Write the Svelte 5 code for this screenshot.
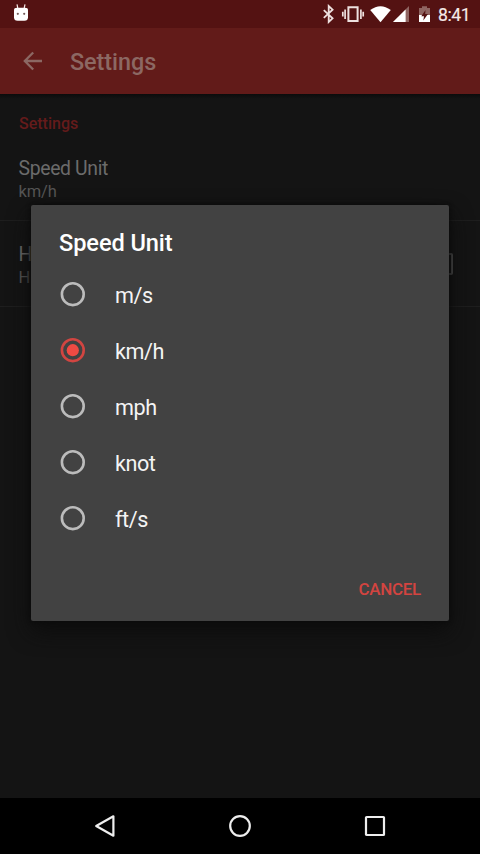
<script>
  const units = ['m/s', 'km/h', 'mph', 'knot', 'ft/s'];
  let selected = $state('km/h');
</script>

<div class="screen">
  <div class="status">
    <svg class="debug" width="16" height="18" viewBox="0 0 16 18">
      <path d="M4 .4 4.8 4M12 .4 11.2 4" stroke="#f7e9e7" stroke-width="1.2" />
      <path d="M1 6.2Q1 3.8 4 3.8H12Q15 3.8 15 6.2V13.2Q15 16.8 11.4 16.8H4.6Q1 16.8 1 13.2Z" fill="#fff" />
      <circle cx="4.8" cy="9.8" r="1.1" fill="#745b59" /><circle cx="11.2" cy="9.8" r="1.1" fill="#745b59" />
    </svg>
    <svg class="icons" width="110" height="20" viewBox="0 0 110 20" fill="none">
      <path d="M3.8 6.2 12.6 14.3 8.7 18V2L12.6 5.7 3.8 13.8" stroke="#eee1df" stroke-width="1.8" />
      <path d="M28.4 3.3H37.6V17.1H28.4Z" stroke="#eee1df" stroke-width="2" />
      <path d="M25.1 5.5V15M40.9 5.5V15M22.8 7.8V12.5M43.2 7.8V12.5" stroke="#eee1df" stroke-width="1.7" />
      <path d="M50.2 6.1Q60.5-1.7 70.8 6.1L60.5 18.2Z" fill="#fff" />
      <path d="M73 18 89 2V18Z" fill="#8f6461" />
      <path d="M73 18 85.6 5.4V18Z" fill="#fff" />
      <path d="M99 4H102V2.3H107V4H110V18H99Z" fill="#8f6461" />
      <path d="M99 11H110V18H99Z" fill="#fff" />
      <path d="M105.5 6 101.3 12.2H104L103.3 16.5 108 10H105.2Z" fill="#541212" />
    </svg>
    <span class="time">8:41</span>
  </div>
  <header>
    <svg width="20" height="20" viewBox="0 0 20 20" fill="none" stroke="#8c6863" stroke-width="2.3">
      <path d="M19 10H2M10.2 1.5 1.8 10 10.2 18.5" />
    </svg>
    <h1>Settings</h1>
  </header>
  <main>
    <div class="category">Settings</div>
    <div class="pref first">
      <div class="name">Speed Unit</div>
      <div class="summary">km/h</div>
    </div>
    <div class="pref second">
      <div>
        <div class="name">H</div>
        <div class="summary">H</div>
      </div>
      <span class="check"></span>
    </div>
  </main>
  <nav>
    <svg width="22" height="24" viewBox="0 0 22 24"><path d="M2.2 12 19.4 2.3V21.7Z" /></svg>
    <svg width="24" height="24" viewBox="0 0 24 24"><circle cx="12" cy="12" r="9.8" /></svg>
    <svg width="22" height="24" viewBox="0 0 22 24"><rect x="2" y="3" width="18" height="18" rx=".6" /></svg>
  </nav>

  <div class="dialog" role="dialog" aria-label="Speed Unit">
    <h2>Speed Unit</h2>
    <div class="options" role="radiogroup">
      {#each units as unit}
        <button class="option" role="radio" aria-checked={selected === unit} onclick={() => (selected = unit)}>
          <svg class="radio" class:on={selected === unit} width="26" height="26" viewBox="0 0 26 26">
            <circle cx="12.8" cy="13.2" r="10.9" />
            {#if selected === unit}<circle class="dot" cx="12.8" cy="13.2" r="6.1" />{/if}
          </svg>
          <span class="label">{unit}</span>
        </button>
      {/each}
    </div>
    <div class="actions"><button class="cancel">CANCEL</button></div>
  </div>
</div>

<style>
  :global(body) { margin: 0; background: #141414; }
  .screen {
    position: relative; width: 480px; height: 854px; overflow: hidden;
    display: flex; flex-direction: column; background: #141414;
    font-family: Roboto, sans-serif;
  }
  button { border: 0; padding: 0; background: none; font-family: inherit; text-align: left; }
  svg { display: block; flex: none; }
  .status { height: 28px; flex: none; display: flex; background: #541212; }
  .debug { margin: 4px 0 0 13px; }
  .icons { margin: 4px 0 0 291px; }
  .time { margin-left: 8px; line-height: 30px; font-size: 17.6px; letter-spacing: -.4px; color: #f5eae8; -webkit-text-stroke: .15px #f5eae8; white-space: nowrap; }
  header { height: 66px; flex: none; display: flex; align-items: center; background: #621b19; padding-left: 23px; }
  h1 { margin: 3px 0 0 27px; font-size: 23.4px; font-weight: 500; line-height: 29px; letter-spacing: -.05px; color: #8c6863; }
  main { flex: 1; background: linear-gradient(#0c0c0c, #141414 5px); }
  .category { padding: 20px 0 0 19px; font-size: 16px; line-height: 20px; font-weight: 500; color: #651b1b; }
  .pref { box-sizing: border-box; padding-left: 18.5px; border-bottom: 1px solid #1e1e1e; }
  .first { height: 87px; padding-top: 23px; }
  .second { height: 86px; padding-top: 22px; display: flex; justify-content: space-between; }
  .name { font-size: 19.4px; line-height: 24px; letter-spacing: -.35px; color: #6b6b6b; }
  .summary { font-size: 16.5px; line-height: 21px; letter-spacing: -.15px; color: #555; }
  .check { box-sizing: border-box; width: 21px; height: 22px; margin: 10px 27px 0 0; border: 2px solid #555; border-radius: 2px; }
  nav { height: 56px; flex: none; background: #000; display: flex; align-items: center; justify-content: space-between; padding: 0 94px; box-sizing: border-box; }
  nav svg { fill: none; stroke: #eee; stroke-width: 2.2; stroke-linejoin: round; }
  .dialog {
    position: absolute; left: 31px; top: 205px; width: 418px; height: 416px; box-sizing: border-box;
    background: #424242; border-radius: 2px; box-shadow: 0 10px 22px #0c0c0c, 0 0 5px #090909;
    display: flex; flex-direction: column;
  }
  h2 { margin: 24px 0 0 28px; font-size: 23.6px; font-weight: 500; line-height: 29px; letter-spacing: -.1px; color: #fff; }
  .options { margin-top: 8px; display: flex; flex-direction: column; }
  .option { height: 56px; display: flex; align-items: center; padding-left: 29px; }
  .radio { fill: none; stroke: #bcbcbc; stroke-width: 2.6; }
  .on { stroke: #d24541; }
  .dot { fill: #f04a43; stroke: none; }
  .label { margin: 3px 0 0 29px; font-size: 21.6px; line-height: 29px; letter-spacing: -.45px; color: #f4f4f4; }
  .actions { display: flex; justify-content: flex-end; padding: 33px 28px 0 0; }
  .cancel { font-size: 17px; font-weight: 500; line-height: 20px; letter-spacing: -.3px; color: #d34440; }
</style>
